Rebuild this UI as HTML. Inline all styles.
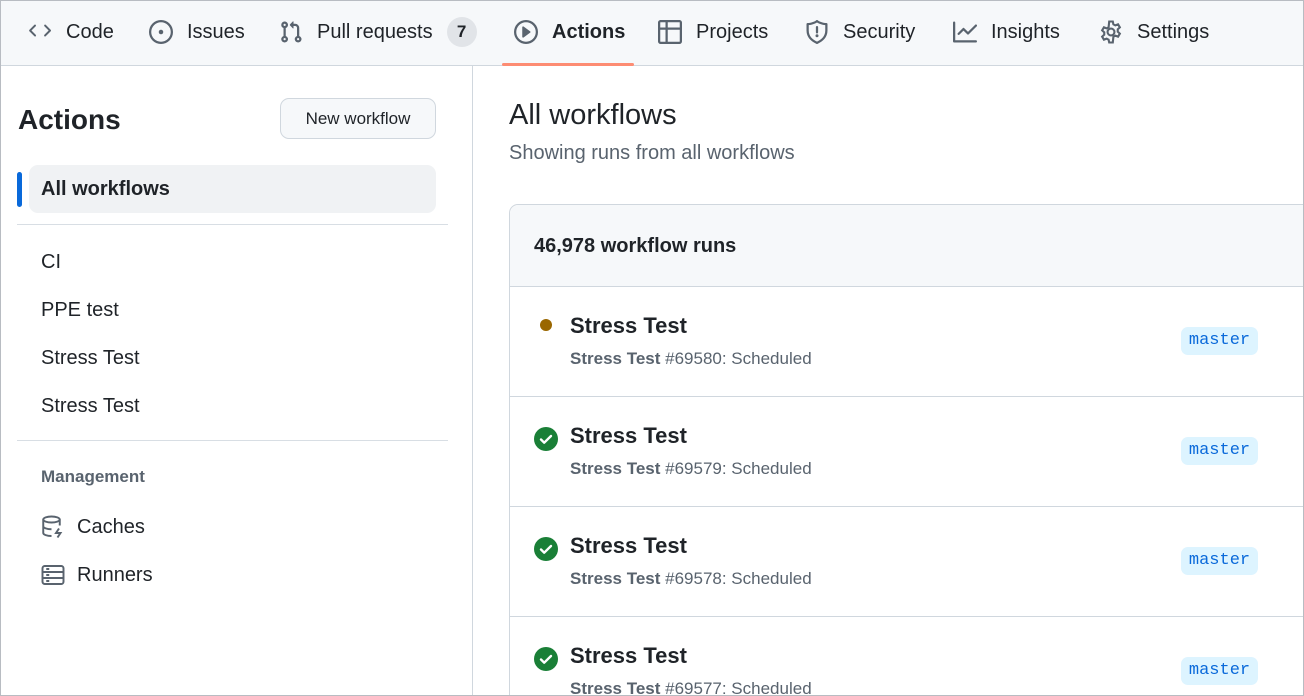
<!DOCTYPE html>
<html style="overflow:hidden;width:1304px;height:696px"><head><meta charset="utf-8"><style>
*{box-sizing:border-box;margin:0;padding:0}
body{width:1304px;height:696px;overflow:hidden;background:#fff;font-family:"Liberation Sans",sans-serif;color:#1f2328;position:relative}
.frame{position:absolute;left:0;top:0;width:1304px;height:696px;border:1px solid #b8bcc2;z-index:10;pointer-events:none}
.nav{position:absolute;left:0;top:0;width:1304px;height:66px;background:#f6f8fa;border-bottom:1px solid #d0d7de}
.ni{position:absolute;top:17px;font-size:20px;color:#1f2328;display:flex;align-items:center;height:30px}
.ni svg{margin-right:14px}
.badge{display:inline-block;background:#e1e4e8;border-radius:15px;width:30px;height:30px;line-height:30px;text-align:center;font-size:17px;font-weight:bold;margin-left:14px}
.uline{position:absolute;left:502px;top:63px;width:132px;height:3px;background:#fd8c73;border-radius:2px}
.side{position:absolute;left:0;top:66px;width:473px;height:630px;border-right:1px solid #d0d7de}
.h1{position:absolute;left:18px;top:104px;font-size:28px;font-weight:bold}
.btn{position:absolute;left:280px;top:98px;width:156px;height:41px;border:1px solid #d0d7de;border-radius:9px;background:#f6f8fa;font-size:17px;text-align:center;line-height:39px}
.sel{position:absolute;left:29px;top:165px;width:407px;height:48px;background:#f0f2f4;border-radius:9px;font-size:20px;font-weight:bold;padding-left:12px;line-height:48px}
.selbar{position:absolute;left:17px;top:172px;width:5px;height:35px;background:#0969da;border-radius:3px}
.hr{position:absolute;left:17px;width:431px;height:1px;background:#d8dee4}
.si{position:absolute;left:41px;font-size:20px}
.mg{position:absolute;left:41px;top:467px;font-size:17px;font-weight:bold;color:#59636e}
.main-t{position:absolute;left:509px;top:99px;font-size:29px}
.main-s{position:absolute;left:509px;top:142px;font-size:20px;color:#59636e}
.box{position:absolute;left:509px;top:204px;width:820px;height:520px;border:1px solid #d0d7de;border-radius:9px 0 0 0}
.bh{height:82px;background:#f6f8fa;border-bottom:1px solid #d0d7de;border-radius:9px 0 0 0;font-size:20px;font-weight:bold;padding-left:24px;line-height:82px}
.row{position:relative;height:110px;border-bottom:1px solid #d0d7de}
.rt{position:absolute;left:60px;top:26px;font-size:22px;font-weight:bold}
.rs{position:absolute;left:60px;top:62px;font-size:17px;color:#59636e}
.rs b{color:#59636e}
.tag{position:absolute;left:671px;top:40px;width:77px;height:28px;background:#ddf4ff;border-radius:7px;color:#0969da;font-family:"Liberation Mono",monospace;font-size:17px;text-align:center;line-height:28px}
.ic{position:absolute;left:24px;top:30px}
</style></head><body>
<div class="frame"></div>
<div class="nav">
<div class="ni" style="left:28px"><svg width="24" height="24" viewBox="0 0 16 16" fill="#59636e"><path d="M4.7 3.7a.75.75 0 0 1 0 1.06L1.5 8l3.2 3.2a.75.75 0 1 1-1.06 1.06L-.1 8.5a.75.75 0 0 1 0-1L3.64 3.7a.75.75 0 0 1 1.06 0Zm6.6 0a.75.75 0 0 1 1.06 0L16.1 7.5a.75.75 0 0 1 0 1l-3.74 3.76a.75.75 0 1 1-1.06-1.06L14.5 8l-3.2-3.24a.75.75 0 0 1 0-1.06Z" transform="translate(1 0) scale(.88)"/></svg>Code</div>
<div class="ni" style="left:149px"><svg width="24" height="24" viewBox="0 0 16 16" fill="#59636e"><path d="M8 9.5a1.5 1.5 0 1 0 0-3 1.5 1.5 0 0 0 0 3Z"/><path d="M8 0a8 8 0 1 1 0 16A8 8 0 0 1 8 0ZM1.5 8a6.5 6.5 0 1 0 13 0 6.5 6.5 0 0 0-13 0Z"/></svg>Issues</div>
<div class="ni" style="left:279px"><svg width="24" height="24" viewBox="0 0 16 16" fill="#59636e"><path d="M1.5 3.25a2.25 2.25 0 1 1 3 2.12v5.26a2.25 2.25 0 1 1-1.5 0V5.37a2.25 2.25 0 0 1-1.5-2.12Zm5.970-.53 1.78-1.78a.25.25 0 0 1 .43.18V2.5h1.07A2.75 2.75 0 0 1 13.5 5.25v5.38a2.25 2.25 0 1 1-1.5 0V5.25c0-.69-.56-1.25-1.25-1.25H9.68v1.38a.25.25 0 0 1-.43.17L7.47 3.78a.75.75 0 0 1 0-1.06ZM3.75 12a.75.75 0 1 0 0 1.5.75.75 0 0 0 0-1.5Zm9 0a.75.75 0 1 0 0 1.5.75.75 0 0 0 0-1.5ZM3.75 2.5a.75.75 0 1 0 0 1.5.75.75 0 0 0 0-1.5Z"/></svg>Pull requests<span class="badge">7</span></div>
<div class="ni" style="left:514px;font-weight:bold"><svg width="24" height="24" viewBox="0 0 16 16" fill="#59636e"><path d="M8 0a8 8 0 1 1 0 16A8 8 0 0 1 8 0ZM1.5 8a6.5 6.5 0 1 0 13 0 6.5 6.5 0 0 0-13 0Zm4.88-3.64 4.4 3.2a.55.55 0 0 1 0 .88l-4.4 3.2A.55.55 0 0 1 5.5 11.2V4.8a.55.55 0 0 1 .88-.44Z"/></svg>Actions</div>
<div class="ni" style="left:658px"><svg width="24" height="24" viewBox="0 0 16 16" fill="#59636e"><path d="M0 1.75C0 .78.78 0 1.75 0h12.5C15.22 0 16 .78 16 1.75v12.5A1.75 1.75 0 0 1 14.25 16H1.75A1.75 1.75 0 0 1 0 14.25ZM6.5 6.5v8h7.75a.25.25 0 0 0 .25-.25V6.5Zm8-1.5V1.75a.25.25 0 0 0-.25-.25H6.5V5Zm-13 1.5v7.75c0 .14.11.25.25.25H5v-8ZM5 5V1.5H1.75a.25.25 0 0 0-.25.25V5Z"/></svg>Projects</div>
<div class="ni" style="left:805px"><svg width="24" height="24" viewBox="0 0 16 16" fill="#59636e"><path d="M7.47.22a.75.75 0 0 1 1.06 0l.03.02C10 1.3 12.4 2 14.25 2a.75.75 0 0 1 .75.75V7c0 4.6-3.1 7.3-6.770 8.96a.75.75 0 0 1-.46 0C4.1 14.3 1 11.6 1 7V2.75A.75.75 0 0 1 1.75 2C3.6 2 6 1.3 7.44.24ZM2.5 3.45V7c0 3.7 2.4 6 5.5 7.45 3.1-1.45 5.5-3.750 5.5-7.45V3.45C11.6 3.3 9.6 2.6 8 1.67 6.4 2.6 4.4 3.3 2.5 3.45ZM8 4a.75.75 0 0 1 .75.75v3.5a.75.75 0 0 1-1.5 0v-3.5A.75.75 0 0 1 8 4Zm0 7.5a1 1 0 1 1 0-2 1 1 0 0 1 0 2Z"/></svg>Security</div>
<div class="ni" style="left:953px"><svg width="24" height="24" viewBox="0 0 16 16" fill="#59636e"><path d="M1.5 1.75V13.5h13.75a.75.75 0 0 1 0 1.5H.75a.75.75 0 0 1-.75-.75V1.75a.75.75 0 0 1 1.5 0Zm14.28 2.53-5.25 5.25a.75.75 0 0 1-1.06 0L7 7.06 4.28 9.78a.75.75 0 0 1-1.06-1.06l3.25-3.25a.75.75 0 0 1 1.06 0L10 7.94l4.72-4.72a.75.75 0 1 1 1.06 1.06Z"/></svg>Insights</div>
<div class="ni" style="left:1099px"><svg width="24" height="24" viewBox="0 0 16 16" fill="none" stroke="#59636e" stroke-width="1.4"><circle cx="8" cy="8" r="2.3"/><path d="M6.8 1h2.4l.4 1.9 1.3.7 1.8-.7 1.2 2-1.4 1.3v1.6l1.4 1.3-1.2 2-1.8-.7-1.3.7L9.2 15H6.8l-.4-1.9-1.3-.7-1.8.7-1.2-2 1.4-1.3V8.2L2.1 6.9l1.2-2 1.8.7 1.3-.7Z"/></svg>Settings</div>
<div class="uline"></div>
</div>
<div class="side"></div>
<div class="h1">Actions</div>
<div class="btn">New workflow</div>
<div class="sel">All workflows</div>
<div class="selbar"></div>
<div class="hr" style="top:224px"></div>
<div class="si" style="top:251px">CI</div>
<div class="si" style="top:299px">PPE test</div>
<div class="si" style="top:347px">Stress Test</div>
<div class="si" style="top:395px">Stress Test</div>
<div class="hr" style="top:440px"></div>
<div class="mg">Management</div>
<div class="si" style="top:515px;left:41px;display:flex;align-items:center"><svg width="24" height="24" viewBox="0 0 16 16" fill="none" stroke="#59636e" stroke-width="1.3" style="margin-right:12px"><ellipse cx="7" cy="3" rx="5.5" ry="2"/><path d="M1.5 3v9c0 1.1 2.5 2 5.5 2M12.5 3v4M1.5 7.5c0 1.1 2.5 2 5.5 2"/><path d="M12 9l-2 3h3l-2 3" /></svg>Caches</div>
<div class="si" style="top:563px;left:41px;display:flex;align-items:center"><svg width="24" height="24" viewBox="0 0 16 16" fill="none" stroke="#59636e" stroke-width="1.3" style="margin-right:12px"><rect x="1" y="2" width="14" height="12" rx="1.5"/><path d="M1 6h14M1 10h14M3.5 4h2M3.5 8h2M3.5 12h2"/></svg>Runners</div>
<div class="main-t">All workflows</div>
<div class="main-s">Showing runs from all workflows</div>
<div class="box">
<div class="bh">46,978 workflow runs</div>
<div class="row"><svg class="ic" width="24" height="24" viewBox="0 0 24 24" style="top:28px"><circle cx="12" cy="10" r="6" fill="#9a6700"/></svg><div class="rt">Stress Test</div><div class="rs"><b>Stress Test</b> #69580: Scheduled</div><div class="tag">master</div></div>
<div class="row"><svg class="ic" width="24" height="24" viewBox="0 0 24 24"><circle cx="12" cy="12" r="12" fill="#1a7f37"/><path d="M7 12.5l3.2 3.2L17 9" stroke="#fff" stroke-width="2.4" fill="none" stroke-linecap="round" stroke-linejoin="round"/></svg><div class="rt">Stress Test</div><div class="rs"><b>Stress Test</b> #69579: Scheduled</div><div class="tag">master</div></div>
<div class="row"><svg class="ic" width="24" height="24" viewBox="0 0 24 24"><circle cx="12" cy="12" r="12" fill="#1a7f37"/><path d="M7 12.5l3.2 3.2L17 9" stroke="#fff" stroke-width="2.4" fill="none" stroke-linecap="round" stroke-linejoin="round"/></svg><div class="rt">Stress Test</div><div class="rs"><b>Stress Test</b> #69578: Scheduled</div><div class="tag">master</div></div>
<div class="row"><svg class="ic" width="24" height="24" viewBox="0 0 24 24"><circle cx="12" cy="12" r="12" fill="#1a7f37"/><path d="M7 12.5l3.2 3.2L17 9" stroke="#fff" stroke-width="2.4" fill="none" stroke-linecap="round" stroke-linejoin="round"/></svg><div class="rt">Stress Test</div><div class="rs"><b>Stress Test</b> #69577: Scheduled</div><div class="tag">master</div></div>
</div>
</body></html>
